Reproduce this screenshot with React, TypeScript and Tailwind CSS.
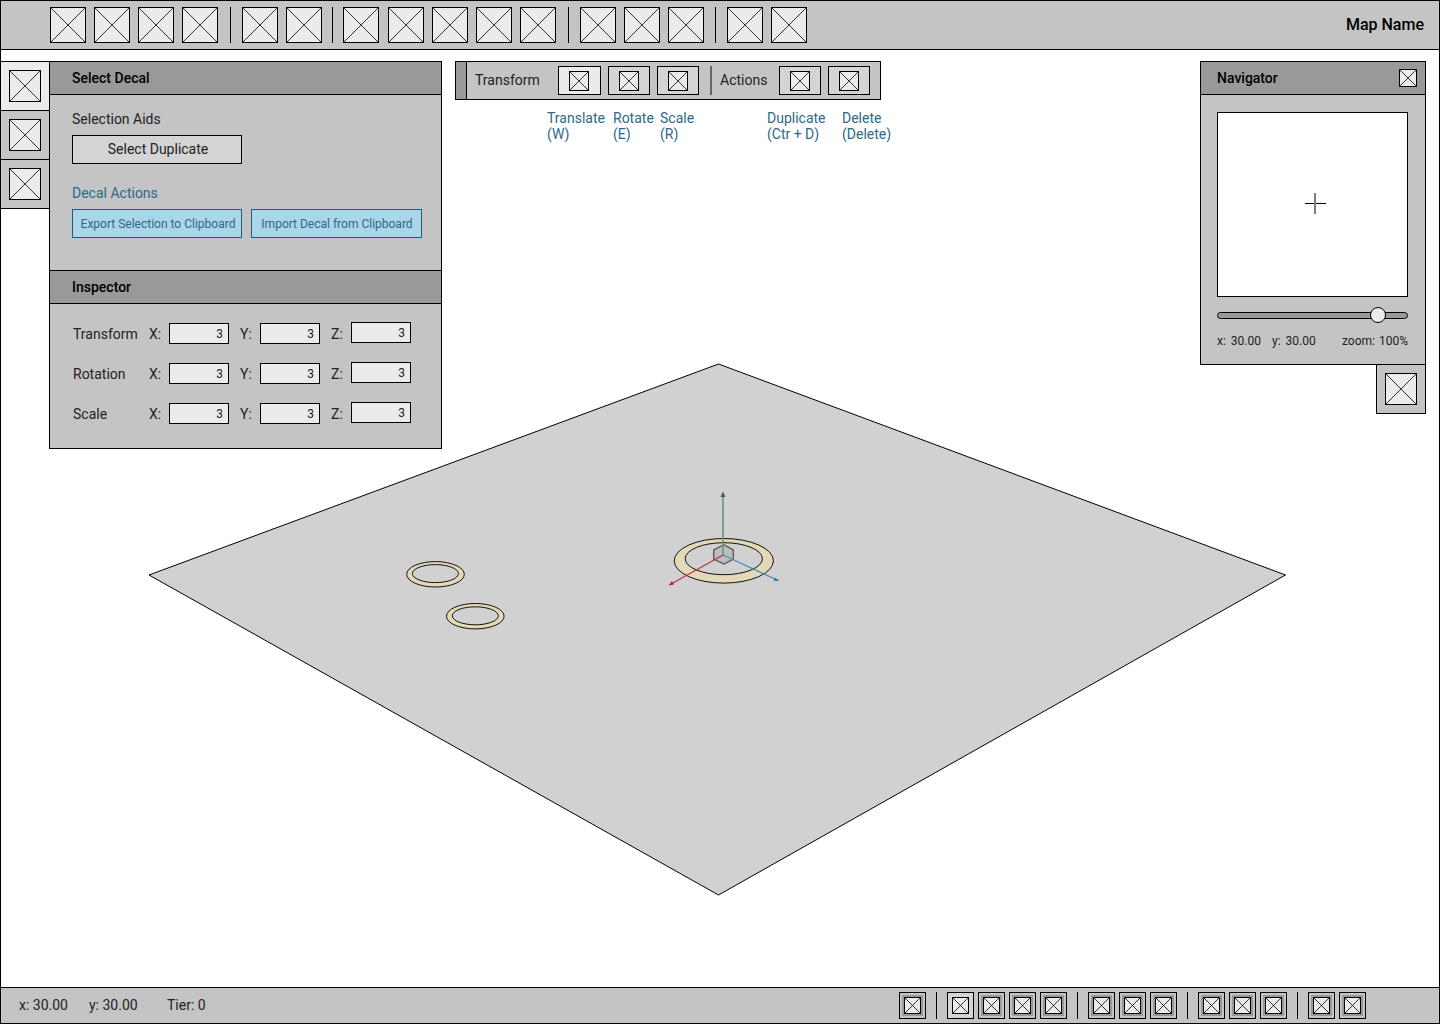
import React from 'react'

const Ph = ({ size, stroke = 1 }: { size: number; stroke?: number }) => (
    <svg width={size} height={size} viewBox={`0 0 ${size} ${size}`} className="block shrink-0">
        <rect x="0.5" y="0.5" width={size - 1} height={size - 1} fill="#ebebeb" stroke="#000" strokeWidth={stroke} />
        <path d={`M0.5 0.5L${size - 0.5} ${size - 0.5}M${size - 0.5} 0.5L0.5 ${size - 0.5}`} stroke="#000" strokeWidth="0.8" fill="none" />
    </svg>
)

const TopSep = ({ className }: { className: string }) => <div className={`w-px h-9 bg-black shrink-0 ${className}`} />

const TopBar = () => (
    <div className="h-[50px] shrink-0 flex items-center bg-[#c4c4c4] border border-black pl-[49px] pr-[15px]">
        <div className="flex gap-2">
            {[0, 1, 2, 3].map((i) => <Ph key={i} size={36} />)}
        </div>
        <TopSep className="ml-3 mr-[11px]" />
        <div className="flex gap-2">
            {[0, 1].map((i) => <Ph key={i} size={36} />)}
        </div>
        <TopSep className="ml-[10px] mr-[10px]" />
        <div className="flex gap-2">
            <div className="mr-px"><Ph size={36} /></div>
            {[0, 1, 2, 3].map((i) => <Ph key={i} size={36} />)}
        </div>
        <TopSep className="ml-3 mr-[11px]" />
        <div className="flex gap-2">
            {[0, 1, 2].map((i) => <Ph key={i} size={36} />)}
        </div>
        <TopSep className="ml-[11px] mr-[11px]" />
        <div className="flex gap-2">
            {[0, 1].map((i) => <Ph key={i} size={36} />)}
        </div>
        <span className="ml-auto text-base font-medium text-black">Map Name</span>
    </div>
)

const SideTabs = () => (
    <div className="w-[48px] shrink-0 flex flex-col">
        <div className="h-[50px] bg-[#ebebeb] border-y border-black flex items-center justify-center"><Ph size={32} /></div>
        <div className="h-[49px] bg-[#c4c4c4] border-b border-black flex items-center justify-center"><Ph size={32} /></div>
        <div className="h-[49px] bg-[#c4c4c4] border-b border-black flex items-center justify-center"><Ph size={32} /></div>
    </div>
)

const PanelHeader = ({ title }: { title: string }) => (
    <div className="h-[33px] bg-[#999999] border-b border-black flex items-center pl-[22px] text-sm font-medium text-black">{title}</div>
)

const Field = ({ label, up }: { label: string; up?: boolean }) => (
    <div className="flex items-center">
        <span className="w-5 text-sm text-[#222]">{label}:</span>
        <div className={`w-[60px] h-[21px] bg-[#ebebeb] border border-black flex items-center justify-end pr-[5px] text-xs text-[#222] ${up ? '-translate-y-px' : ''}`}>3</div>
    </div>
)

const InspectorRow = ({ label }: { label: string }) => (
    <div className="flex items-center h-[21px]">
        <span className="w-[76px] text-sm text-[#222]">{label}</span>
        <div className="flex gap-[11px]">
            <Field label="X" />
            <Field label="Y" />
            <Field label="Z" up />
        </div>
    </div>
)

const DecalPanel = () => (
    <div className="w-[393px] h-[388px] shrink-0 bg-[#c4c4c4] border border-black flex flex-col">
        <PanelHeader title="Select Decal" />
        <div className="h-[176px] pl-[22px] pt-[16px] border-b border-black">
            <div className="text-sm leading-4 text-[#222]">Selection Aids</div>
            <button className="mt-2 block w-[170px] h-[29px] pl-[2px] pb-px bg-[#d4d4d4] border border-black text-sm text-[#222]">Select Duplicate</button>
            <div className="mt-[21px] text-sm leading-4 text-[#2b6a88]">Decal Actions</div>
            <div className="mt-2 flex gap-[9px]">
                <button className="w-[170px] h-[29px] pl-[2px] bg-[#abd5e8] border border-[#1f5f7e] text-xs text-[#2b6a88] whitespace-nowrap">Export Selection to Clipboard</button>
                <button className="w-[171px] h-[29px] pl-px bg-[#abd5e8] border border-[#1f5f7e] text-xs text-[#2b6a88] whitespace-nowrap">Import Decal from Clipboard</button>
            </div>
        </div>
        <PanelHeader title="Inspector" />
        <div className="pl-[23px] pt-[19px] flex flex-col gap-[19px]">
            <InspectorRow label="Transform" />
            <InspectorRow label="Rotation" />
            <InspectorRow label="Scale" />
        </div>
    </div>
)

const ToolBtn = ({ active }: { active?: boolean }) => (
    <div className={`h-[29px] border border-black flex items-center justify-center ${active ? 'w-[43px] pr-px bg-[#ebebeb]' : 'w-[42px] bg-[#d4d4d4]'}`}>
        <Ph size={20} />
    </div>
)

const hints = [
    { a: 'Translate', b: '(W)', cls: 'w-[66px]' },
    { a: 'Rotate', b: '(E)', cls: 'w-[47px]' },
    { a: 'Scale', b: '(R)', cls: 'w-[107px]' },
    { a: 'Duplicate', b: '(Ctr + D)', cls: 'w-[75px]' },
    { a: 'Delete', b: '(Delete)', cls: 'w-[60px]' },
]

const TransformBar = () => (
    <div className="ml-[13px] shrink-0">
        <div className="w-[426px] h-[39px] bg-[#c4c4c4] border border-black flex items-center">
            <div className="w-[11px] h-full bg-[#999999] border-r border-black" />
            <span className="ml-2 w-[83px] pb-0.5 text-sm text-[#222]">Transform</span>
            <div className="flex gap-[7px]">
                <ToolBtn active />
                <ToolBtn />
                <ToolBtn />
            </div>
            <div className="ml-[11px] w-0.5 h-[29px] bg-[#666666]" />
            <span className="ml-[8px] w-[59px] pb-0.5 text-sm text-[#222]">Actions</span>
            <div className="flex gap-[7px]">
                <ToolBtn />
                <ToolBtn />
            </div>
        </div>
        <div className="mt-[10px] ml-[92px] flex text-sm leading-4 text-[#2b6a88]">
            {hints.map((h) => (
                <div key={h.a} className={`${h.cls} whitespace-nowrap`}>
                    <div>{h.a}</div>
                    <div>{h.b}</div>
                </div>
            ))}
        </div>
    </div>
)

const Navigator = () => (
    <div className="ml-auto mr-[13px] shrink-0 flex flex-col items-end">
        <div className="w-[226px] h-[304px] bg-[#c4c4c4] border border-black">
            <div className="h-[33px] bg-[#999999] border-b border-black flex items-center justify-between pl-4 pr-2 text-sm font-medium text-black">
                <span>Navigator</span>
                <Ph size={18} />
            </div>
            <div className="px-4 pt-[17px]">
                <div className="relative w-[191px] h-[185px] bg-white border border-black">
                    <div className="absolute left-[87px] top-[90px] w-[21px] h-px bg-black" />
                    <div className="absolute left-[96px] top-[80px] w-0.5 h-[21px] bg-[#808080]" />
                </div>
                <div className="relative mt-[15px] w-[191px] h-[7px] rounded-full bg-[#999999] border border-black">
                    <div className="absolute left-[152px] -top-[6px] w-4 h-4 rounded-full bg-[#ebebeb] border border-black" />
                </div>
                <div className="mt-[14px] w-[191px] flex text-xs leading-4 text-[#222]">
                    <span className="w-[55px] flex gap-[5px]"><span>x:</span><span>30.00</span></span>
                    <span className="flex gap-[5px]"><span>y:</span><span>30.00</span></span>
                    <span className="ml-auto flex gap-1"><span>zoom:</span><span>100%</span></span>
                </div>
            </div>
        </div>
        <div className="w-[50px] h-[50px] -mt-px bg-[#c4c4c4] border border-black flex items-center justify-center"><Ph size={32} /></div>
    </div>
)

const Gizmo = () => (
    <svg width="1438" height="937" viewBox="1 50 1438 937" className="absolute left-0 top-0">
        <polygon points="718.5,364 1285.5,575 718.5,895 149,575" fill="#d1d1d1" stroke="#000" strokeWidth="1" />
        {/* decal rings */}
        <ellipse cx="435.5" cy="574.3" rx="28.8" ry="12.7" fill="#e3d8b8" stroke="#111" strokeWidth="1" />
        <ellipse cx="435.4" cy="573.6" rx="23" ry="9" fill="#d1d1d1" stroke="#111" strokeWidth="1" />
        <ellipse cx="475.3" cy="616.2" rx="28.8" ry="12.7" fill="#e3d8b8" stroke="#111" strokeWidth="1" />
        <ellipse cx="475.3" cy="615.8" rx="23" ry="9" fill="#d1d1d1" stroke="#111" strokeWidth="1" />
        <ellipse cx="723.8" cy="560.8" rx="49.6" ry="22.3" fill="#e3d8b8" stroke="#111" strokeWidth="1" />
        <ellipse cx="723.8" cy="558.7" rx="38.6" ry="16" fill="#d1d1d1" stroke="#111" strokeWidth="1" />
        {/* gizmo */}
        <polygon points="724,544.7 733.3,550 733.3,559 724,564 713.7,559 713.7,550" fill="#bdbdbd" stroke="#555" strokeWidth="1.3" />
        <line x1="723" y1="555" x2="723" y2="495" stroke="#6d9a78" strokeWidth="1.7" />
        <polygon points="723,491.5 720.5,497 725.5,497" fill="#2f6b45" />
        <line x1="723" y1="555" x2="672" y2="583.5" stroke="#c0353f" strokeWidth="1.3" />
        <polygon points="668.5,585.5 674,584.5 672,581" fill="#b02a36" />
        <line x1="723" y1="555" x2="776" y2="579.5" stroke="#4a90b5" strokeWidth="1.3" />
        <polygon points="779.5,581 775,577.5 773.5,581" fill="#2f7fa3" />
    </svg>
)

const BarBtn = ({ active }: { active?: boolean }) => (
    <div className={`w-[27px] h-[27px] border border-black flex items-center justify-center ${active ? 'bg-[#d4d4d4]' : 'bg-[#c4c4c4]'}`}>
        <div className={`p-0.5 ${active ? '' : 'bg-[#999999]'}`}><Ph size={17} /></div>
    </div>
)

const BottomSep = () => <div className="w-px h-[27px] bg-black mx-[10px]" />

const BottomBar = () => (
    <div className="h-[37px] shrink-0 bg-[#c4c4c4] border border-black flex items-center pl-[18px] pr-[73px] text-sm text-[#222]">
        <span className="w-[70px] pb-0.5">x: 30.00</span>
        <span className="w-[78px] pb-0.5">y: 30.00</span>
        <span className="pb-0.5">Tier: 0</span>
        <div className="ml-auto flex items-center">
            <BarBtn />
            <BottomSep />
            <div className="flex gap-1">
                <BarBtn active />
                <BarBtn />
                <BarBtn />
                <BarBtn />
            </div>
            <BottomSep />
            <div className="flex gap-1">
                <BarBtn />
                <BarBtn />
                <BarBtn />
            </div>
            <BottomSep />
            <div className="flex gap-1">
                <BarBtn />
                <BarBtn />
                <BarBtn />
            </div>
            <BottomSep />
            <div className="flex gap-1">
                <BarBtn />
                <BarBtn />
            </div>
        </div>
    </div>
)

export default function App() {
    return (
        <div className="w-[1440px] h-[1024px] flex flex-col bg-white overflow-hidden font-['Roboto',sans-serif]">
            <TopBar />
            <div className="relative flex-1 border-x border-black">
                <Gizmo />
                <div className="relative flex items-start pt-[11px]">
                    <SideTabs />
                    <DecalPanel />
                    <TransformBar />
                    <Navigator />
                </div>
            </div>
            <BottomBar />
        </div>
    )
}
